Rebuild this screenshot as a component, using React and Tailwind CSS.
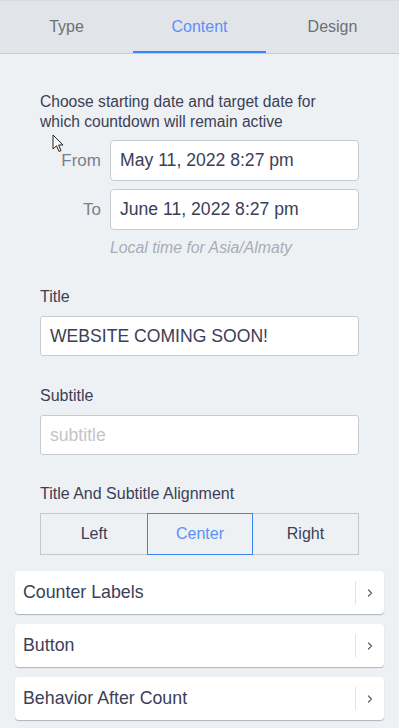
import React from "react";

function Chevron() {
  return (
    <svg width="8" height="10" viewBox="0 0 8 10" fill="none">
      <path d="M2.5 2 L5.5 5 L2.5 8" stroke="#5a6070" strokeWidth="1.2" strokeLinecap="round" strokeLinejoin="round" />
    </svg>
  );
}

function Card({ label }) {
  return (
    <div className="flex h-[43px] items-center rounded-[4px] bg-white shadow-[0_1px_1px_rgba(120,130,145,0.55)]">
      <span className="flex-1 pl-[8px] text-[17.8px] text-[#3b4057]">{label}</span>
      <div className="h-[23px] w-px bg-[#dfe2e6]" />
      <div className="flex w-[28px] items-center justify-center">
        <Chevron />
      </div>
    </div>
  );
}

export default function App() {
  return (
    <div
      className="relative h-[728px] w-[399px] overflow-hidden bg-[#eef1f4]"
      style={{ fontFamily: '"Liberation Sans", Arial, sans-serif' }}
    >
      {/* tabs */}
      <div className="flex h-[54px] border-t border-b border-t-[#d6dadf] border-b-[#c9cdd2] bg-[#e1e5ea]">
        <div className="flex flex-1 items-center justify-center text-[16px] text-[#6c6f76]">Type</div>
        <div className="relative flex flex-1 items-center justify-center text-[16px] text-[#5b8ff9]">
          Content
          <div className="absolute bottom-0 left-0 right-0 h-[2px] bg-[#3b86f7]" />
        </div>
        <div className="flex flex-1 items-center justify-center text-[16px] text-[#6c6f76]">Design</div>
      </div>

      <div className="px-[40px]">
        <p className="mt-[38px] text-[15.6px] leading-[20px] text-[#3b4057]">
          Choose starting date and target date for which countdown will remain active
        </p>

        <div className="mt-[8px] flex items-center">
          <span className="w-[61px] text-right text-[17px] text-[#7a808c]">From</span>
          <div className="ml-[9px] flex h-[41px] flex-1 items-center rounded-[4px] border border-[#c7cbd0] bg-white pl-[9px] text-[17.6px] text-[#3b4057]">
            May 11, 2022 8:27 pm
          </div>
        </div>
        <div className="mt-[8px] flex items-center">
          <span className="w-[61px] text-right text-[17px] text-[#7a808c]">To</span>
          <div className="ml-[9px] flex h-[41px] flex-1 items-center rounded-[4px] border border-[#c7cbd0] bg-white pl-[9px] text-[17.6px] text-[#3b4057]">
            June 11, 2022 8:27 pm
          </div>
        </div>
        <p className="mt-[8px] pl-[70px] text-[15.8px] italic leading-[20px] text-[#a7adb9]">
          Local time for Asia/Almaty
        </p>

        <p className="mt-[29px] text-[16px] leading-[20px] text-[#3b4057]">Title</p>
        <div className="mt-[9px] flex h-[40px] items-center rounded-[3px] border border-[#c7cbd0] bg-white pl-[9px] text-[17.6px] text-[#3b4057]">
          WEBSITE COMING SOON!
        </div>

        <p className="mt-[30px] text-[16px] leading-[20px] text-[#3b4057]">Subtitle</p>
        <div className="mt-[9px] flex h-[40px] items-center rounded-[3px] border border-[#c7cbd0] bg-white pl-[9px] text-[17.6px] text-[#c3c5c8]">
          subtitle
        </div>

        <p className="mt-[29px] text-[16px] leading-[20px] text-[#3b4057]">Title And Subtitle Alignment</p>
        <div className="mt-[9px] flex h-[42px]">
          <div className="flex w-[107px] items-center justify-center border border-r-0 border-[#c4c7cb] text-[16px] text-[#3b4057]">Left</div>
          <div className="flex w-[106px] items-center justify-center border border-[#3b86f7] text-[16px] text-[#5b8ff9]">Center</div>
          <div className="flex flex-1 items-center justify-center border border-l-0 border-[#c4c7cb] text-[16px] text-[#3b4057]">Right</div>
        </div>
      </div>

      <div className="mt-[16px] flex flex-col gap-[10px] px-[15px]">
        <Card label="Counter Labels" />
        <Card label="Button" />
        <Card label="Behavior After Count" />
      </div>

      {/* mouse cursor */}
      <svg className="absolute left-[52px] top-[134px]" width="14" height="20" viewBox="0 0 14 20">
        <path d="M1 1 L1 15 L4.5 11.8 L7 17.5 L9 16.6 L6.6 11 L11 11 Z" fill="white" stroke="#222" strokeWidth="1" strokeLinejoin="round" />
      </svg>
    </div>
  );
}
